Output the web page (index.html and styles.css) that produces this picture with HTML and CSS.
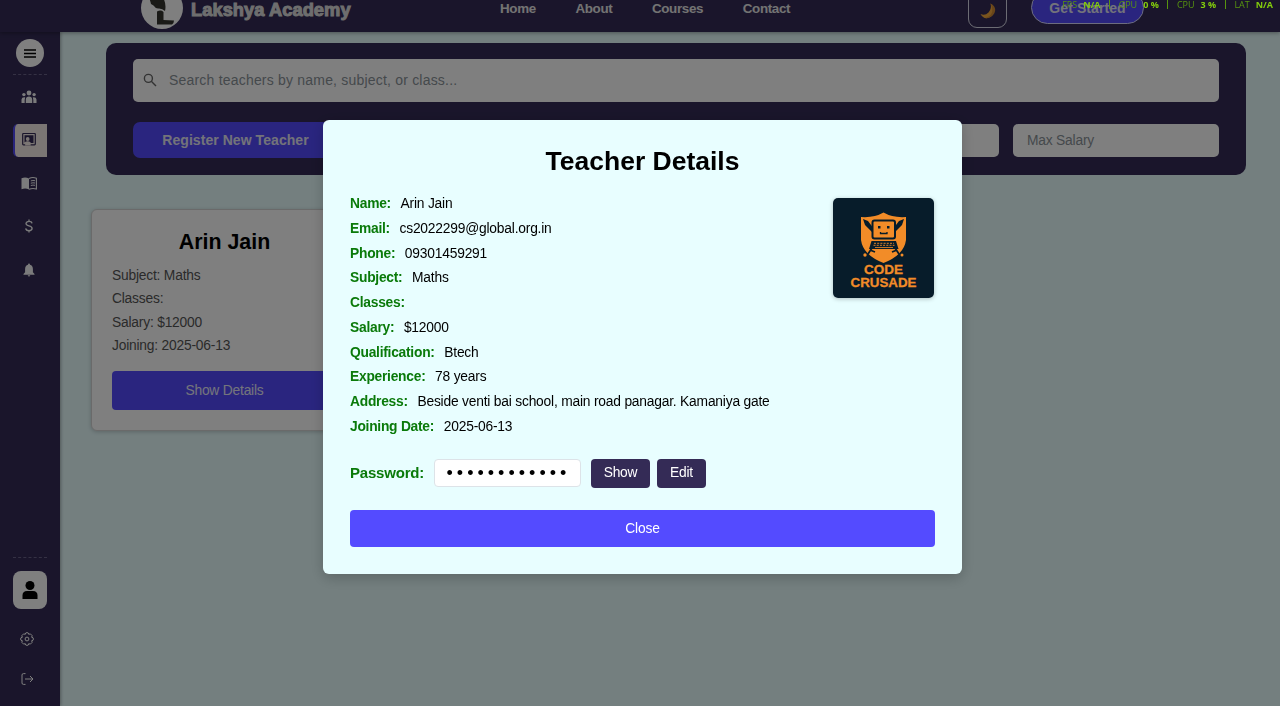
FILE: index.html
```html
<!DOCTYPE html>
<html lang="en">
<head>
<meta charset="utf-8">
<title>Lakshya Academy</title>
<link rel="stylesheet" href="styles.css">
</head>
<body>
<header class="header">
  <div class="header-inner">
    <div class="brand">
      <svg class="brand-logo" viewBox="0 0 42 42"><circle cx="21" cy="21" r="21" fill="#fff"/><path d="M8 10L20 8Q26 15 24 24Q21 21 17 21.500Q14 21 12.500 18.500L10 17L9.500 15Z" fill="#35352f"/><path d="M16 24.500Q20 22.500 22.500 25V33L33 33.500Q33 36 31 37.500H16Z" fill="#35352f"/></svg>
      <span class="brand-name">Lakshya Academy</span>
    </div>
    <nav class="nav"><a>Home</a><a>About</a><a>Courses</a><a>Contact</a></nav>
    <div class="actions">
      <div class="theme"><svg width="16" height="16" viewBox="0 0 16 16"><path d="M10.500 .5A8 8 0 0 1 8 15Q3 16 .5 11Q5 13 8.500 9.500Q12 5.500 10.500 .5Z" fill="#f4a93c"/><path d="M10.500 .5Q17 4 14.500 10Q11 16 5 15Q10 14 12 9.500Q13 5 10.500 .5Z" fill="#d08a34"/></svg></div>
      <div class="started">Get Started</div>
    </div>
  </div>
</header>
<div class="shell">
  <aside class="sidebar">
    <div class="toggle"><svg width="12" height="9" viewBox="0 0 12 9"><path d="M0 1H12M0 4.500H12M0 8H12" stroke="#000" stroke-width="1.300"/></svg></div>
    <div class="divider"></div>
    <div class="side-item"><svg width="16" height="14" viewBox="0 0 16 14" fill="#fff"><circle cx="8" cy="3" r="2.400"/><circle cx="2.900" cy="4.600" r="1.700"/><circle cx="13.100" cy="4.600" r="1.700"/><path d="M4.800 13V9.500Q5 6.500 8 6.500T11.200 9.500V13ZM.5 13V9.500Q.7 7.200 3.600 7.300L4.200 7.600Q3.600 9 3.700 13ZM15.500 13V9.500Q15.300 7.200 12.400 7.300L11.800 7.600Q12.400 9 12.300 13Z"/></svg></div>
    <div class="side-item active"><svg width="14" height="13" viewBox="0 0 14 13"><path d="M1.500 .5H12.500Q13.300 .5 13.300 1.300V11Q13.300 11.800 12.500 11.800H1.500Q.7 11.800 .7 11V1.300Q.7 .5 1.500 .5Z" fill="#fff4ee" stroke="#342b56" stroke-width="1.200"/><path d="M2.500 2.300H11.500V10H9Q8 8.500 6 8.300T2.500 9.500Z" fill="#342b56"/><circle cx="5.700" cy="6" r="1.900" fill="#fff4ee"/><path d="M3 12.500Q3.200 9 5.900 9T8.800 12.500Z" fill="#fff4ee"/></svg></div>
    <div class="side-item"><svg width="16" height="13" viewBox="0 0 16 13"><path d="M.5 1.200Q4.500-.2 8 1.500V12.500Q4.500 10.800 .5 12.200Z" fill="#fff"/><path d="M8 1.500Q11.500-.2 15.400 1.200V12Q11.500 10.800 8 12.300" fill="none" stroke="#fff" stroke-width="1.100"/><path d="M9.800 3.900Q12 3.200 14 3.700M9.800 6.200Q12 5.500 14 6M9.800 8.500Q12 7.800 14 8.300" fill="none" stroke="#fff" stroke-width="1"/></svg></div>
    <div class="side-item"><svg width="10" height="14" viewBox="0 0 10 14" fill="none" stroke="#fff" stroke-width="1.300"><path d="M8 4.300Q7.600 2.400 5 2.400T2 4.500Q2 6.200 5 6.900T8.100 9.400Q8 11.600 5 11.600T1.700 9.300M5 .4V2.400M5 11.600V13.600"/></svg></div>
    <div class="side-item"><svg width="12" height="14" viewBox="0 0 12 14" fill="#fff"><path d="M6 .5Q7 .5 7 1.700Q9.900 2.500 9.900 6V9.300L11.500 11V11.700H.5V11L2.100 9.300V6Q2.100 2.500 5 1.700Q5 .5 6 .5ZM4.700 12.300H7.300Q7 13.600 6 13.600T4.700 12.300Z"/></svg></div>
    <div class="side-bottom">
      <div class="divider"></div>
      <div class="profile"><svg width="16" height="18" viewBox="0 0 16 18"><circle cx="8" cy="4.500" r="4.500"/><path d="M.5 18V14.500Q.5 10 5 10H11Q15.500 10 15.500 14.500V18Z"/></svg></div>
      <div class="side-link"><svg width="14" height="14" viewBox="0 0 14 14" fill="none" stroke="#fff" stroke-width="1"><path d="M5.700 1Q7 .2 8.300 1L8.700 2.300L10.400 1.900L12.100 3.600L11.700 5.300L13 5.700Q13.800 7 13 8.300L11.700 8.700L12.100 10.400L10.400 12.100L8.700 11.700L8.300 13Q7 13.800 5.700 13L5.300 11.700L3.600 12.100L1.900 10.400L2.300 8.700L1 8.300Q.2 7 1 5.700L2.300 5.300L1.900 3.600L3.600 1.900L5.300 2.300Z"/><circle cx="7" cy="7" r="1.900"/></svg></div>
      <div class="side-link"><svg width="13" height="12" viewBox="0 0 13 12" fill="none" stroke="#fff" stroke-width="1"><path d="M4.500 .6H2.500Q1 .6 1 2V10Q1 11.400 2.500 11.400H4.500M4 6H12M9 3L12 6L9 9"/></svg></div>
    </div>
  </aside>
  <main class="main">
    <section class="filters">
      <div class="search"><svg width="14" height="14" viewBox="0 0 14 14" fill="none" stroke="#666" stroke-width="1.400"><circle cx="5.400" cy="5.400" r="4"/><path d="M8.300 8.300L13 13"/></svg><span>Search teachers by name, subject, or class...</span></div>
      <div class="filter-row">
        <div class="register">Register New Teacher</div>
        <div class="salaries"><div class="salary"></div><div class="salary">Max Salary</div></div>
      </div>
    </section>
    <section class="card">
      <h2>Arin Jain</h2>
      <p>Subject: Maths</p><p>Classes:</p><p>Salary: $12000</p><p>Joining: 2025-06-13</p>
      <div class="card-button">Show Details</div>
    </section>
  </main>
</div>
<div class="overlay">
  <div class="modal">
    <h1>Teacher Details</h1>
    <div class="details">
      <div class="fields">
        <p><b>Name:</b><span>Arin Jain</span></p>
        <p><b>Email:</b><span>cs2022299@global.org.in</span></p>
        <p><b>Phone:</b><span>09301459291</span></p>
        <p><b>Subject:</b><span>Maths</span></p>
        <p><b>Classes:</b></p>
        <p><b>Salary:</b><span>$12000</span></p>
        <p><b>Qualification:</b><span>Btech</span></p>
        <p><b>Experience:</b><span>78 years</span></p>
        <p><b>Address:</b><span>Beside venti bai school, main road panagar. Kamaniya gate</span></p>
        <p><b>Joining Date:</b><span>2025-06-13</span></p>
      </div>
      <svg class="photo" viewBox="0 0 101 100">
        <rect width="101" height="100" fill="#071c2a"/>
        <path d="M28 19Q41 20 50.500 14.500Q60 20 73 19V42Q71 57 50.500 65Q30 57 28 42Z" fill="#f28c28"/>
        <path d="M30 21L35 23L41 31V36L32 27ZM71 21L66 23L60 31V36L69 27Z" fill="#071c2a"/>
        <rect x="39.500" y="22.500" width="22.500" height="18" rx="2" fill="#f28c28" stroke="#071c2a" stroke-width="2"/>
        <path d="M45 28H47.500V30.500H45ZM54 28H56.500V30.500H54Z" fill="#071c2a"/><path d="M47.500 34V35.500H54V34" fill="none" stroke="#071c2a" stroke-width="1.300"/>
        <path d="M38.500 43H63L65.500 51H36Z" fill="#071c2a"/>
        <path d="M41 45.300H61M40.500 47.300H61.500" stroke="#f28c28" stroke-width=".9" stroke-dasharray="2 1.200"/>
        <path d="M42 49.500H60" stroke="#f28c28" stroke-width=".8"/>
        <path d="M39 50L35 56M62 50L66 56M37 52L42 54M64 52L59 54" stroke="#071c2a" stroke-width="1.800"/>
        <circle cx="32" cy="57" r="1.700" fill="#f28c28"/><circle cx="69" cy="57" r="1.500" fill="#f28c28"/>
        <text x="50.500" y="76" textLength="39" lengthAdjust="spacingAndGlyphs">CODE</text>
        <text x="50.500" y="88.500" textLength="66" lengthAdjust="spacingAndGlyphs">CRUSADE</text>
      </svg>
    </div>
    <div class="password">
      <b>Password:</b><div class="password-field">••••••••••••</div>
      <div class="small-button show">Show</div><div class="small-button edit">Edit</div>
    </div>
    <div class="close">Close</div>
  </div>
</div>
<div class="stats"><span>FPS</span><b>N/A</b><i></i><span>GPU</span><b>0 %</b><i></i><span>CPU</span><b>3 %</b><i></i><span>LAT</span><b>N/A</b></div>
</body>
</html>
```
FILE: styles.css
```css
* { box-sizing: border-box; }
body { margin: 0; height: 706px; overflow: hidden; background: #e8feff; font: 13.8px "Liberation Sans", Arial, sans-serif; letter-spacing: -.2px; color: #000; }
h1, h2, p { margin: 0; }
svg { display: block; flex: none; }
.header { position: relative; z-index: 2; height: 32px; background: #342b56; box-shadow: 0 1px 4px rgba(0,0,0,.35); color: #fff; }
.header-inner { display: flex; align-items: center; height: 49px; padding-left: 141px; transform: translateY(-17px); }
.brand { display: flex; align-items: center; gap: 8px; width: 359px; }
.brand-logo { width: 42px; height: 42px; }
.brand-name { margin-top: 5px; font-size: 18.3px; font-weight: bold; letter-spacing: .05px; color: #ddd; white-space: nowrap; -webkit-text-stroke: 1px #ddd; }
.nav { display: flex; gap: 39.5px; width: 468px; padding-top: 1px; font-size: 13.4px; letter-spacing: -.33px; font-weight: bold; color: #e6e6e6; }
.actions { display: flex; align-items: center; gap: 24px; }
.theme { display: grid; place-items: center; width: 39px; height: 40px; padding-top: 6px; border: 1px solid #d9d9e8; border-radius: 9px; }
.started { width: 113px; height: 33px; border: 1px solid #d9d9ff; border-radius: 17px; background: #544bff; color: #e6e6f6; text-align: center; font-size: 14px; font-weight: bold; line-height: 33px; letter-spacing: .08px; }
.shell { display: flex; height: 674px; }
.sidebar { display: flex; flex-direction: column; width: 60.4px; padding: 7px 13px 0 13.3px; background: #342b56; box-shadow: 1px 0 3px rgba(0,0,0,.3); }
.toggle { display: grid; place-items: center; width: 28px; height: 28px; margin-left: 3px; border-radius: 50%; background: #fff; }
.divider { width: 34px; margin-top: 7px; border-top: 1px dashed #6a6389; }
.side-item { display: grid; place-items: center; width: 33.7px; height: 33px; padding-right: 2px; margin-bottom: 10.2px; opacity: .96; }
.divider + .side-item { margin-top: 5.4px; }
.active { background: #fff4ee; border-left: 2px solid #544bff; border-radius: 5px 0 0 5px; padding: 0 4px 2px 0; }
.side-bottom { margin-top: auto; height: 149px; }
.side-bottom .divider { margin: 0 0 13px; }
.profile { display: grid; place-items: center; width: 33.5px; height: 38px; border-radius: 8px; background: #fff; }
.side-link { display: grid; place-items: center; width: 28px; height: 20px; margin-top: 20px; }
.main { flex: 1; padding: 11px 34px 0 30.6px; }
.filters { height: 132px; margin-left: 15px; padding: 16px 27px; border-radius: 10px; background: #342b56; }
.search { display: flex; align-items: center; gap: 12px; height: 43px; padding: 0 0 1px 10px; border-radius: 5px; background: #fff; color: #8a9298; font-size: 14px; letter-spacing: .2px; }
.filter-row { display: flex; justify-content: space-between; align-items: center; height: 36px; margin-top: 20px; }
.register { width: 205px; height: 36px; border-radius: 7px; background: #544bff; color: #e6e6f4; text-align: center; font-size: 14px; font-weight: bold; line-height: 36px; letter-spacing: .06px; }
.salaries { display: flex; gap: 14px; }
.salary { width: 206px; height: 33px; padding-left: 14px; border-radius: 5px; background: #fff; color: #8a9298; line-height: 33px; }
.card { width: 267px; height: 222px; margin-top: 34px; padding: 18px 20px 0; border: 1px solid #d5d5d5; border-radius: 6px; background: #fff; box-shadow: 0 1px 4px rgba(0,0,0,.2); color: #555; }
.card h2 { margin-bottom: 8px; color: #000; font-size: 21.4px; line-height: 28px; letter-spacing: 0; text-align: center; }
.card p { line-height: 23.4px; }
.card-button { height: 39px; margin-top: 13px; border-radius: 4px; background: #544bff; color: #e9e9f8; text-align: center; line-height: 39px; }
.overlay { position: fixed; inset: 0; z-index: 5; display: flex; justify-content: center; align-items: flex-start; padding: 120px 0 0 5px; background: rgba(0,0,0,.5); }
.modal { width: 639px; height: 454px; padding: 26px 27px 27px; border-radius: 6px; background: #e8feff; box-shadow: 0 4px 14px rgba(0,0,0,.2); }
.modal h1 { margin-bottom: 16px; font-size: 26.5px; line-height: 31px; height: 30px; letter-spacing: 0; text-align: center; }
.details { display: flex; justify-content: space-between; height: 247.5px; }
.fields p { display: flex; gap: 9.6px; line-height: 24.75px; }
.fields b { letter-spacing: -.25px; }
.fields b, .password b { color: #0a7a0a; }
.photo { width: 101px; height: 100px; margin: 6px 1px 0 0; border-radius: 5px; box-shadow: 0 1px 4px rgba(0,0,0,.25); }
.photo text { font: bold 13px "Liberation Sans", sans-serif; letter-spacing: 0; fill: #f28c28; stroke: #f28c28; stroke-width: .3; text-anchor: middle; }
.password { display: flex; align-items: flex-start; height: 29px; margin-top: 19.5px; }
.password b { width: 84px; font-size: 15px; line-height: 28px; letter-spacing: -.2px; }
.password-field { width: 147px; height: 28px; margin-right: 10px; padding-left: 11.5px; border: 1px solid #dde3e8; border-radius: 4px; background: #fff; font-size: 18px; line-height: 27px; letter-spacing: 4.02px; }
.small-button { height: 29px; border-radius: 4px; background: #342b56; color: #fff; text-align: center; line-height: 28px; }
.show { width: 59px; margin-right: 7px; }
.edit { width: 49px; }
.close { height: 37px; margin-top: 22px; border-radius: 4px; background: #544bff; color: #fff; text-align: center; line-height: 37px; }
.stats { position: fixed; top: 0; right: 7px; z-index: 6; display: flex; align-items: center; height: 9px; font: 9px/9px "Open Sans", sans-serif; letter-spacing: 0; color: #57940f; }
.stats b { margin-left: 6px; color: #83cc0c; }
.stats i { width: 1px; height: 9px; margin: 0 8.6px; background: #57940f; }
```
